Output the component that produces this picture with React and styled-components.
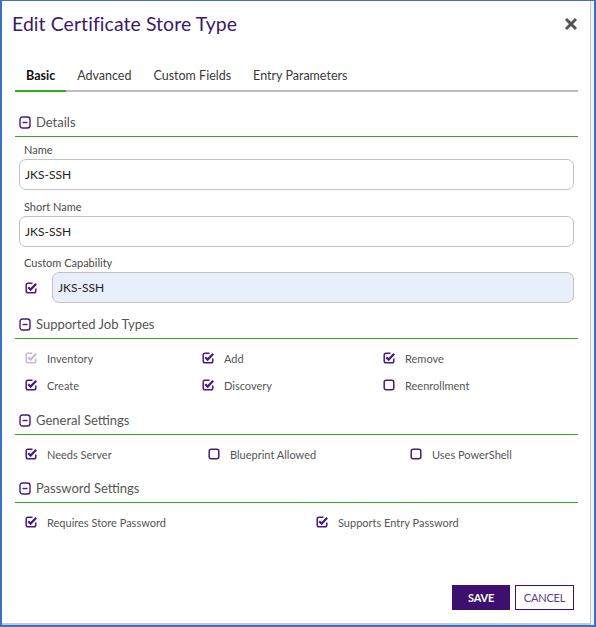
import React from "react";
import styled, { createGlobalStyle } from "styled-components";

const GlobalStyle = createGlobalStyle`
  html, body {
    margin: 0;
    padding: 0;
    background: #ffffff;
  }
  body {
    font-family: Lato, "Liberation Sans", sans-serif;
  }
  * {
    box-sizing: border-box;
  }
`;

const PURPLE = "#451c7a";
const GREEN = "#3aa62a";

const Frame = styled.div`
  width: 596px;
  height: 627px;
  display: flex;
  border-left: 2px solid #3f70c0;
  border-top: 1px solid #3f70c0;
  border-bottom: 2px solid #3f70c0;
  border-right: 2px solid #3f70c0;
  background: #f2f2f2;
`;

const Modal = styled.div`
  width: 589px;
  height: 100%;
  background: #ffffff;
  border-right: 1px solid #c4c4c4;
  border-bottom: 2px solid #c8c8c8;
  padding: 0 12px 0 13px;
  display: flex;
  flex-direction: column;
`;

const Header = styled.div`
  display: flex;
  align-items: center;
  justify-content: space-between;
  height: 44px;
  margin-left: -3px;
  padding-top: 1px;
`;

const Title = styled.h2`
  margin: 0;
  font-size: 19.4px;
  font-weight: 400;
  color: #3b1a68;
  letter-spacing: 0.1px;
`;

const CloseButton = styled.button`
  border: none;
  background: none;
  padding: 0;
  width: 16px;
  height: 16px;
  margin-right: -1px;
  color: #555555;
  cursor: pointer;

  svg {
    display: block;
    width: 100%;
    height: 100%;
  }
`;

const Tabs = styled.div`
  display: flex;
  margin-top: 23px;
  border-bottom: 2px solid #bdbdbd;
`;

const Tab = styled.div`
  padding: 0 11px 6px;
  font-size: 12.5px;
  color: ${(p) => (p.$active ? "#111111" : "#3a3a3a")};
  font-weight: ${(p) => (p.$active ? 700 : 400)};
  border-bottom: 2px solid ${(p) => (p.$active ? GREEN : "transparent")};
  margin-bottom: -2px;
  line-height: 16px;
`;

const SectionHeader = styled.div`
  display: flex;
  align-items: center;
  gap: 5px;
  height: 28px;
  padding: 0 0 1px 4px;
  margin-top: ${(p) => p.$top}px;
  border-bottom: 1px solid ${GREEN};
  font-size: 13px;
  color: #555555;
`;

const Field = styled.div`
  display: flex;
  flex-direction: column;
  margin: ${(p) => p.$top}px 4px 0;
`;

const Label = styled.label`
  font-size: 11px;
  color: #4a4a4a;
  padding-left: 5px;
  line-height: 14px;
  margin-bottom: 2px;
`;

const InputRow = styled.div`
  display: flex;
  align-items: center;
  gap: 15px;
  padding-left: ${(p) => (p.$withCheck ? "6px" : "0")};
`;

const Input = styled.input`
  flex: 1 1 auto;
  min-width: 0;
  height: 31px;
  border: 1px solid #c2c2c2;
  border-radius: 7px;
  background: ${(p) => (p.$filled ? "#e8effb" : "#ffffff")};
  padding: 0 5px;
  font-family: inherit;
  font-size: 12px;
  color: #222222;
  outline: none;
`;

const OptionGrid = styled.div`
  display: grid;
  grid-template-columns: ${(p) => p.$cols};
  row-gap: 9px;
  padding-left: 10px;
  margin-top: ${(p) => p.$top}px;
`;

const Option = styled.div`
  display: flex;
  align-items: center;
  gap: 10px;
  height: 18px;
  font-size: 11px;
  color: #555555;
`;

const Footer = styled.div`
  margin-top: auto;
  display: flex;
  justify-content: flex-end;
  gap: 5px;
  padding: 0 4px 13px 0;
`;

const Button = styled.button`
  height: 25px;
  padding: 0;
  width: ${(p) => p.$w}px;
  font-family: inherit;
  font-size: 11px;
  font-weight: ${(p) => (p.$primary ? 700 : 400)};
  letter-spacing: -0.2px;
  border: 1px solid #3d0f6e;
  background: ${(p) => (p.$primary ? "#3d0f6e" : "#ffffff")};
  color: ${(p) => (p.$primary ? "#ffffff" : "#5a3b8c")};
  cursor: pointer;
`;

const CloseIcon = () => (
  <svg viewBox="0 0 16 16">
    <path
      d="M3 3 L13 13 M13 3 L3 13"
      stroke="currentColor"
      strokeWidth="3"
      strokeLinecap="butt"
    />
  </svg>
);

const MinusSquare = () => (
  <svg width="12" height="13" viewBox="0 0 12 13">
    <rect
      x="1"
      y="1"
      width="10"
      height="11"
      rx="2.5"
      fill="none"
      stroke={PURPLE}
      strokeWidth="1.4"
    />
    <path d="M3.5 6.5 H8.5" stroke={PURPLE} strokeWidth="1.4" />
  </svg>
);

const CheckBox = ({ checked, disabled }) => {
  const color = disabled ? "#c8b8dc" : PURPLE;
  return (
    <svg width="12" height="12" viewBox="0 0 12 12" style={{ flexShrink: 0 }}>
      {checked ? (
        <>
          <path
            d="M7.5 1.2 H3 Q1.2 1.2 1.2 3 V9 Q1.2 10.8 3 10.8 H9 Q10.8 10.8 10.8 9 V6.5"
            fill="none"
            stroke={color}
            strokeWidth="1.5"
          />
          <path
            d="M3.2 5.2 L5.6 7.6 L11.2 1.8"
            fill="none"
            stroke={color}
            strokeWidth="2.2"
          />
        </>
      ) : (
        <rect
          x="1.2"
          y="1.2"
          width="9.6"
          height="9.6"
          rx="2"
          fill="none"
          stroke={color}
          strokeWidth="1.5"
        />
      )}
    </svg>
  );
};

const jobTypes = [
  { label: "Inventory", checked: true, disabled: true },
  { label: "Add", checked: true },
  { label: "Remove", checked: true },
  { label: "Create", checked: true },
  { label: "Discovery", checked: true },
  { label: "Reenrollment", checked: false },
];

const generalSettings = [
  { label: "Needs Server", checked: true },
  { label: "Blueprint Allowed", checked: false },
  { label: "Uses PowerShell", checked: false },
];

const passwordSettings = [
  { label: "Requires Store Password", checked: true },
  { label: "Supports Entry Password", checked: true },
];

const Options = ({ items, cols, top }) => (
  <OptionGrid $cols={cols} $top={top}>
    {items.map((item) => (
      <Option key={item.label}>
        <CheckBox checked={item.checked} disabled={item.disabled} />
        {item.label}
      </Option>
    ))}
  </OptionGrid>
);

const Section = ({ title, top }) => (
  <SectionHeader $top={top}>
    <MinusSquare />
    {title}
  </SectionHeader>
);

export default function App() {
  return (
    <>
      <GlobalStyle />
      <Frame>
        <Modal>
          <Header>
            <Title>Edit Certificate Store Type</Title>
            <CloseButton aria-label="Close">
              <CloseIcon />
            </CloseButton>
          </Header>

          <Tabs>
            <Tab $active>Basic</Tab>
            <Tab>Advanced</Tab>
            <Tab>Custom Fields</Tab>
            <Tab>Entry Parameters</Tab>
          </Tabs>

          <Section title="Details" top={17} />
          <Field $top={6}>
            <Label>Name</Label>
            <Input defaultValue="JKS-SSH" />
          </Field>
          <Field $top={10}>
            <Label>Short Name</Label>
            <Input defaultValue="JKS-SSH" />
          </Field>
          <Field $top={9}>
            <Label>Custom Capability</Label>
            <InputRow $withCheck>
              <CheckBox checked />
              <Input $filled defaultValue="JKS-SSH" />
            </InputRow>
          </Field>

          <Section title="Supported Job Types" top={8} />
          <Options items={jobTypes} cols="177px 181px 1fr" top={10} />

          <Section title="General Settings" top={13} />
          <Options items={generalSettings} cols="183px 202px 1fr" top={10} />

          <Section title="Password Settings" top={12} />
          <Options items={passwordSettings} cols="291px 1fr" top={10} />

          <Footer>
            <Button $primary $w={58}>
              SAVE
            </Button>
            <Button $w={59}>CANCEL</Button>
          </Footer>
        </Modal>
      </Frame>
    </>
  );
}
